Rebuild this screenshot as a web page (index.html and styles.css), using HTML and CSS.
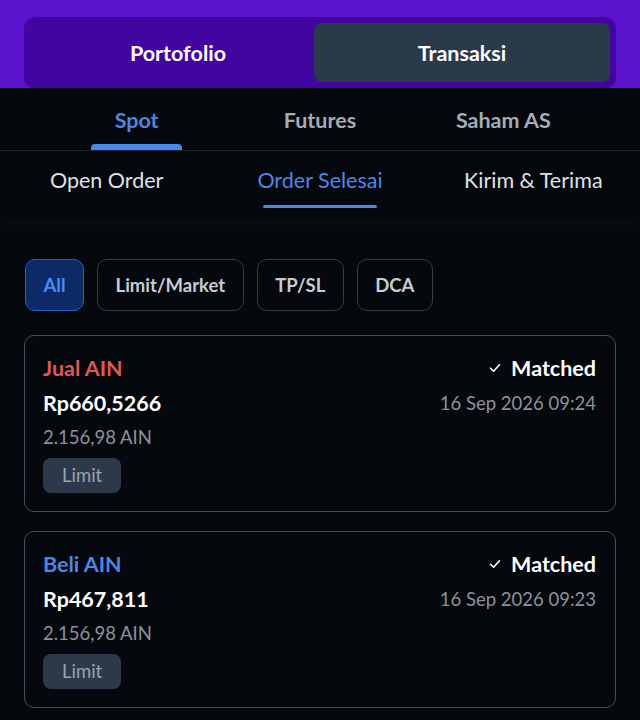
FILE: index.html
```html
<!DOCTYPE html>
<html lang="id">
<head>
  <meta charset="UTF-8" />
  <meta name="viewport" content="width=device-width, initial-scale=1.0"/>
  <title>Transaksi</title>
  <link rel="stylesheet" href="styles.css">
</head>
<body>

  <!-- HEADER UNGU -->
  <header class="top">
    <div class="seg">
      <div class="seg-item">Portofolio</div>
      <div class="seg-item active">Transaksi</div>
    </div>
  </header>

  <!-- TAB PASAR -->
  <nav class="market-tabs">
    <div class="mtab active"><span>Spot</span><i></i></div>
    <div class="mtab"><span>Futures</span><i></i></div>
    <div class="mtab"><span>Saham AS</span><i></i></div>
  </nav>

  <!-- TAB ORDER -->
  <nav class="order-tabs">
    <div class="otab"><span>Open Order</span><i></i></div>
    <div class="otab active"><span>Order Selesai</span><i></i></div>
    <div class="otab"><span>Kirim &amp; Terima</span><i></i></div>
  </nav>

  <!-- FILTER -->
  <div class="filters">
    <button class="chip active">All</button>
    <button class="chip">Limit/Market</button>
    <button class="chip">TP/SL</button>
    <button class="chip">DCA</button>
  </div>

  <!-- DAFTAR ORDER -->
  <div class="orders">
    <div class="card">
      <div class="row">
        <span class="side sell">Jual AIN</span>
        <span class="status">
          <svg width="12" height="10" viewBox="0 0 12 10"><path d="M1.5 5.2 L4.6 8.2 L10.5 1.8" fill="none" stroke="#fff" stroke-width="1.6" stroke-linecap="round" stroke-linejoin="round"/></svg>
          Matched
        </span>
      </div>
      <div class="row">
        <span class="price">Rp660,5266</span>
        <span class="date">16 Sep 2026 09:24</span>
      </div>
      <div class="qty">2.156,98 AIN</div>
      <span class="tag">Limit</span>
    </div>

    <div class="card">
      <div class="row">
        <span class="side buy">Beli AIN</span>
        <span class="status">
          <svg width="12" height="10" viewBox="0 0 12 10"><path d="M1.5 5.2 L4.6 8.2 L10.5 1.8" fill="none" stroke="#fff" stroke-width="1.6" stroke-linecap="round" stroke-linejoin="round"/></svg>
          Matched
        </span>
      </div>
      <div class="row">
        <span class="price">Rp467,811</span>
        <span class="date">16 Sep 2026 09:23</span>
      </div>
      <div class="qty">2.156,98 AIN</div>
      <span class="tag">Limit</span>
    </div>
  </div>

</body>
</html>
```

FILE: styles.css
```css
body {
  margin: 0;
  font-family: 'Lato', 'Noto Sans', sans-serif;
  background: #05080c;
  color: #f3f5f7;
}
.top {
  background: #5a12cc;
  padding: 17px 24px 0;
}
.seg {
  display: grid;
  grid-template-columns: 1fr 296px;
  gap: 4px;
  padding: 6px 6px 6px 22px;
  background: #43059f;
  border-radius: 12px 12px 10px 10px;
}
.seg-item {
  height: 59px;
  display: flex;
  align-items: center;
  justify-content: center;
  font-size: 21.5px;
  font-weight: bold;
  color: #fff;
  border-radius: 8px;
}
.seg-item.active {
  background: #2b3a4b;
}
.market-tabs {
  display: grid;
  grid-template-columns: repeat(3, 1fr);
  padding: 0 45px;
  border-bottom: 1px solid #1b222b;
}
.mtab {
  height: 62px;
  display: flex;
  flex-direction: column;
  align-items: center;
  justify-content: space-between;
  font-size: 21.5px;
  font-weight: bold;
  color: #a3adb8;
}
.mtab span {
  padding-top: 20px;
  line-height: 24px;
}
.mtab i {
  width: 91px;
  height: 6px;
  border-radius: 4px 4px 0 0;
}
.mtab.active {
  color: #4a87e6;
}
.mtab.active i {
  background: #4a87e6;
}
.order-tabs {
  display: grid;
  grid-template-columns: repeat(3, 1fr);
  padding-bottom: 14px;
  box-shadow: 0 6px 10px rgba(255, 255, 255, 0.02);
}
.otab {
  display: flex;
  flex-direction: column;
  align-items: center;
  font-size: 21.5px;
  color: #dde1e5;
}
.otab span {
  padding-top: 17px;
  line-height: 24px;
}
.otab i {
  width: 114px;
  height: 3px;
  margin-top: 13px;
  border-radius: 2px;
}
.otab.active {
  color: #4a87e6;
}
.otab.active i {
  background: #4a87e6;
}
.filters {
  display: flex;
  gap: 13px;
  padding: 37px 24px 0 25px;
}
.chip {
  height: 52px;
  padding: 0 17.5px;
  font-family: inherit;
  font-size: 18.5px;
  font-weight: bold;
  color: #c7ccd3;
  background: #05080c;
  border: 1px solid #353d48;
  border-radius: 10px;
}
.chip.active {
  background: #0c2a66;
  border-color: #2b5cc4;
  color: #4b8bf0;
}
.orders {
  display: flex;
  flex-direction: column;
  gap: 19px;
  padding: 24px 24px 0;
}
.card {
  border: 1px solid #46505e;
  border-radius: 10px;
  padding: 19px 19px 18px 18px;
}
.row {
  display: flex;
  justify-content: space-between;
  align-items: center;
  height: 26px;
}
.row + .row {
  margin-top: 9px;
}
.side {
  font-size: 21.5px;
  font-weight: bold;
}
.side.sell { color: #e25656; }
.side.buy { color: #4a87e6; }
.status {
  display: flex;
  align-items: center;
  gap: 10px;
  font-size: 21.5px;
  font-weight: bold;
  color: #fff;
}
.price {
  font-size: 21.5px;
  font-weight: bold;
  color: #fff;
}
.date {
  font-size: 18.5px;
  color: #8b929b;
}
.qty {
  font-size: 18.5px;
  color: #8b929b;
  line-height: 24px;
  margin-top: 9px;
}
.tag {
  display: inline-block;
  margin-top: 9px;
  padding: 0 19px;
  line-height: 35px;
  font-size: 18.5px;
  color: #9aa3ae;
  background: #2c394a;
  border-radius: 8px;
}
```
